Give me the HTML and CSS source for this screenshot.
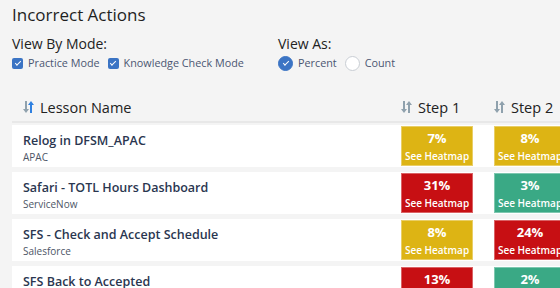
FILE: index.html
```html
<!DOCTYPE html>
<html lang="en">

<head>
    <meta charset="UTF-8">
    <meta name="viewport" content="width=device-width, initial-scale=1.0">
    <title>Incorrect Actions</title>
    <link rel="stylesheet" href="styles.css">
</head>

<body>
    <div class="page">
        <h1>Incorrect Actions</h1>

        <div class="filters">
            <div class="filter-group mode-group">
                <div class="filter-label">View By Mode:</div>
                <div class="options">
                    <label class="option"><span class="checkbox checked"></span>Practice Mode</label>
                    <label class="option"><span class="checkbox checked"></span>Knowledge Check Mode</label>
                </div>
            </div>
            <div class="filter-group">
                <div class="filter-label">View As:</div>
                <div class="options">
                    <label class="option"><span class="radio checked"></span>Percent</label>
                    <label class="option"><span class="radio"></span>Count</label>
                </div>
            </div>
        </div>

        <div class="table">
            <div class="table-head">
                <div class="th th-name"><span class="sort active"></span>Lesson Name</div>
                <div class="th"><span class="sort"></span>Step 1</div>
                <div class="th"><span class="sort"></span>Step 2</div>
            </div>

            <div class="row">
                <div class="lesson">
                    <div class="lesson-title">Relog in DFSM_APAC</div>
                    <div class="lesson-app">APAC</div>
                </div>
                <div class="cell yellow"><b>7%</b><span>See Heatmap</span></div>
                <div class="cell yellow"><b>8%</b><span>See Heatmap</span></div>
            </div>

            <div class="row">
                <div class="lesson">
                    <div class="lesson-title">Safari - TOTL Hours Dashboard</div>
                    <div class="lesson-app">ServiceNow</div>
                </div>
                <div class="cell red"><b>31%</b><span>See Heatmap</span></div>
                <div class="cell green"><b>3%</b><span>See Heatmap</span></div>
            </div>

            <div class="row">
                <div class="lesson">
                    <div class="lesson-title">SFS - Check and Accept Schedule</div>
                    <div class="lesson-app">Salesforce</div>
                </div>
                <div class="cell yellow"><b>8%</b><span>See Heatmap</span></div>
                <div class="cell red"><b>24%</b><span>See Heatmap</span></div>
            </div>

            <div class="row">
                <div class="lesson">
                    <div class="lesson-title">SFS Back to Accepted</div>
                    <div class="lesson-app">Salesforce</div>
                </div>
                <div class="cell red"><b>13%</b><span>See Heatmap</span></div>
                <div class="cell green"><b>2%</b><span>See Heatmap</span></div>
            </div>
        </div>
    </div>
</body>

</html>
```

FILE: styles.css
```css
body {
    margin: 0;
    background: #f4f4f4;
    font-family: "Open Sans", "Noto Sans", Arial, sans-serif;
    color: #222;
    overflow: hidden;
}

.page {
    padding: 3px 0 0 12px;
    width: 700px;
}

h1 {
    margin: 0;
    font-size: 17px;
    font-weight: 400;
    line-height: 24px;
    color: #1e1e1e;
}

.filters {
    display: flex;
    margin-top: 7px;
}

.mode-group {
    width: 266px;
}

.filter-label {
    font-size: 14px;
    line-height: 20px;
    color: #222;
}

.options {
    display: flex;
    gap: 8px;
    margin-top: 1px;
}

.option {
    display: flex;
    align-items: center;
    gap: 5px;
    font-size: 10.8px;
    line-height: 16px;
    color: #4b5672;
}

.checkbox {
    width: 11px;
    height: 11px;
    border-radius: 2px;
    background: #3b74c4;
    position: relative;
}

.checkbox.checked::after,
.radio.checked::after {
    content: "";
    position: absolute;
    width: 5px;
    height: 2px;
    border-left: 1.5px solid #fff;
    border-bottom: 1.5px solid #fff;
    transform: rotate(-45deg);
}

.checkbox.checked::after {
    left: 2.5px;
    top: 3px;
}

.radio {
    width: 13px;
    height: 13px;
    border-radius: 50%;
    border: 1px solid #c9ced4;
    background: #fff;
    position: relative;
}

.radio.checked {
    background: #3b74c4;
    border-color: #3b74c4;
}

.radio.checked::after {
    left: 3.5px;
    top: 4px;
}

.table {
    margin-top: 22px;
}

.table-head,
.row {
    display: grid;
    grid-template-columns: 368px 72px 72px 120px;
    column-gap: 21px;
}

.table-head {
    height: 28px;
    align-items: center;
    border-bottom: 2px solid #e8e8e8;
    margin-bottom: 2px;
}

.th {
    display: flex;
    align-items: center;
    gap: 6px;
    font-size: 14.5px;
    color: #222;
}

.th-name {
    padding-left: 11px;
}

.sort {
    width: 11px;
    height: 12px;
    background:
        linear-gradient(#8fa1ad, #8fa1ad) 2px 0 / 2px 9px no-repeat,
        linear-gradient(#8fa1ad, #8fa1ad) 7px 3px / 2px 9px no-repeat;
    position: relative;
}

.sort::before,
.sort::after {
    content: "";
    position: absolute;
    border-left: 3px solid transparent;
    border-right: 3px solid transparent;
}

.sort::before {
    left: 0;
    top: 8px;
    border-top: 4px solid #8fa1ad;
}

.sort::after {
    left: 5px;
    top: 0;
    border-bottom: 4px solid #8fa1ad;
}

.sort.active {
    background:
        linear-gradient(#8fa1ad, #8fa1ad) 2px 0 / 2px 9px no-repeat,
        linear-gradient(#2f80e0, #2f80e0) 7px 3px / 2px 9px no-repeat;
}

.sort.active::after {
    border-bottom-color: #2f80e0;
}

.row {
    background: #fff;
    height: 42px;
    margin-bottom: 5px;
    padding: 1px 0;
    box-sizing: border-box;
}

.lesson {
    padding: 6px 0 0 11px;
}

.lesson-title {
    font-size: 12.5px;
    font-weight: 600;
    line-height: 18px;
    color: #2a3650;
}

.lesson-app {
    font-size: 10px;
    line-height: 14px;
    color: #4d5566;
}

.cell {
    display: flex;
    flex-direction: column;
    align-items: center;
    justify-content: center;
    color: #fff;
    border: 1px solid rgba(255, 255, 255, 0.35);
}

.cell b {
    font-size: 13px;
    font-weight: 700;
    line-height: 19px;
}

.cell span {
    font-size: 10px;
    font-weight: 600;
    line-height: 16px;
    white-space: nowrap;
}

.yellow {
    background: #ddb414;
}

.red {
    background: #c70f13;
}

.green {
    background: #3aa985;
}
```
